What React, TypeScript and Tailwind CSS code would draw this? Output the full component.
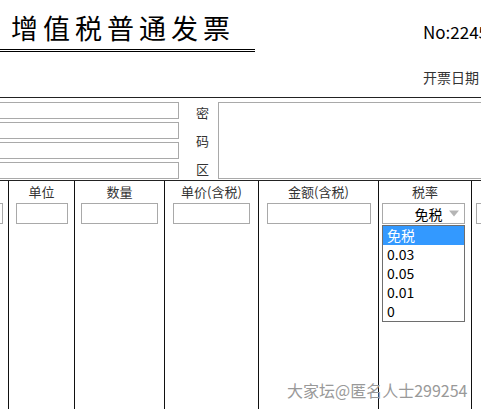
const font = { fontFamily: '"Microsoft YaHei", "Noto Sans CJK SC", "Noto Sans", sans-serif' };

const Box = ({ className }: { className: string }) => (
    <div className={`h-[21px] border border-[#a9a9a9] bg-white ${className}`} />
);

const columns = [
    { label: '单位', width: 'w-[66px]', input: 'w-[52px]' },
    { label: '数量', width: 'w-[90px]', input: 'w-[77px]' },
    { label: '单价(含税)', width: 'w-[94px]', input: 'w-[77px]' },
    { label: '金额(含税)', width: 'w-[120px]', input: 'w-[104px]' },
];

const rates = ['0.03', '0.05', '0.01', '0'];

export default function App() {
    return (
        <div className="w-[481px] h-[409px] overflow-hidden bg-white text-[#222] relative" style={font}>
            {/* Header */}
            <div className="flex h-[98px] border-b border-[#222]">
                <div className="w-[255px] shrink-0 pt-[10px]">
                    <div className="pl-[11px] text-[27px] leading-[36px] tracking-[5px] text-black">增值税普通发票</div>
                    <div className="mt-[3px] h-[3px] border-y border-black" />
                </div>
                <div className="ml-auto w-[58px] shrink-0 pt-[20px] whitespace-nowrap">
                    <div className="text-[17px] leading-[24px] text-black">No:2245</div>
                    <div className="mt-[24px] text-[14px] leading-[18px] text-[#333]">开票日期</div>
                </div>
            </div>

            {/* Buyer + password area */}
            <div className="flex h-[83px] border-b border-[#222]">
                <div className="w-[179px] shrink-0 flex flex-col gap-[3px] pt-[4px]">
                    {[0, 1, 2, 3].map(i => (
                        <div key={i} className="h-[17px] border border-[#a9a9a9] border-l-0" />
                    ))}
                </div>
                <div className="w-[39px] shrink-0 flex flex-col items-center pt-[5px] gap-[8px] text-[13px] leading-[20px] text-[#333]">
                    <span className="pl-[8px]">密</span>
                    <span className="pl-[8px]">码</span>
                    <span className="pl-[8px]">区</span>
                </div>
                <div className="flex-1 mt-[4px] h-[77px] border border-[#a9a9a9] border-r-0" />
            </div>

            {/* Goods table */}
            <div className="flex h-[228px]">
                <div className="w-[9px] shrink-0 border-r border-[#111] pt-[22px]">
                    <div className="h-[21px] w-[3px] border border-l-0 border-[#a9a9a9]" />
                </div>
                {columns.map(c => (
                    <div key={c.label} className={`${c.width} shrink-0 border-r border-[#111] flex flex-col items-center`}>
                        <div className="text-[13px] leading-[20px] text-[#333] pt-[1px]">{c.label}</div>
                        <Box className={`${c.input} mt-[1px]`} />
                    </div>
                ))}
                <div className="w-[93px] shrink-0 border-r border-[#111] flex flex-col items-center relative">
                    <div className="text-[13px] leading-[20px] text-[#333] pt-[1px]">税率</div>
                    <div className="mt-[1px] mr-[4px] w-[83px] h-[21px] border border-[#a9a9a9] flex items-center justify-end pr-[5px] gap-[4px]">
                        <span className="text-[14px] leading-[18px] text-black">免税</span>
                        <svg width="10" height="7" viewBox="0 0 10 7" className="ml-[2px]">
                            <path d="M0 0.5 L10 0.5 L5 6.5 Z" fill="#b5b5b5" />
                        </svg>
                    </div>
                    <div className="absolute left-[3px] top-[44px] w-[83px] border border-[#6e6e6e] bg-white text-[14px] leading-[19px] text-black">
                        <div className="bg-[#3399ff] text-white px-[4px]">免税</div>
                        {rates.map(r => (
                            <div key={r} className="px-[4px]">{r}</div>
                        ))}
                    </div>
                </div>
                <div className="flex-1 min-w-0 pt-[22px] pl-[4px]">
                    <div className="h-[21px] w-[20px] border border-r-0 border-[#a9a9a9]" />
                </div>
            </div>

            {/* Watermark */}
            <div className="absolute left-[287px] top-[379px] text-[16px] leading-[22px] text-[#999] whitespace-nowrap">
                大家坛@匿名人士299254
            </div>
        </div>
    );
}
